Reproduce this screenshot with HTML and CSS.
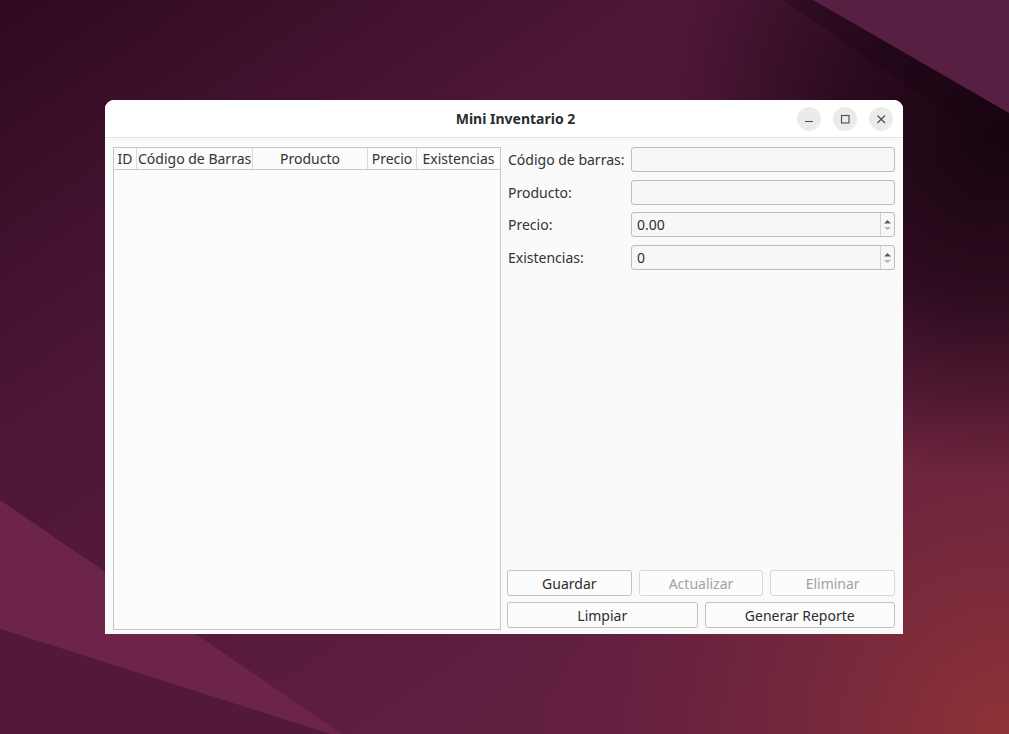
FILE: index.html
```html
<!DOCTYPE html>
<html lang="es">
<head>
<meta charset="utf-8">
<title>Mini Inventario 2</title>
<link rel="stylesheet" href="styles.css">
</head>
<body>
<div class="window">
  <div class="titlebar">
    <div class="title">Mini Inventario 2</div>
    <div class="controls">
      <div class="ctl"><svg width="16" height="16" viewBox="0 0 16 16"><path d="M4 10.5h8" stroke="#4a4a4a" stroke-width="1.2" fill="none"/></svg></div>
      <div class="ctl"><svg width="16" height="16" viewBox="0 0 16 16"><rect x="4.5" y="4.5" width="7.5" height="7.5" stroke="#4a4a4a" stroke-width="1.1" fill="none"/></svg></div>
      <div class="ctl"><svg width="16" height="16" viewBox="0 0 16 16"><path d="M4.5 4.5l7.5 7.5M12 4.5l-7.5 7.5" stroke="#4a4a4a" stroke-width="1.1" fill="none"/></svg></div>
    </div>
  </div>
  <div class="content">
    <div class="table">
      <div class="thead">
        <div class="th c-id">ID</div>
        <div class="th c-code">Código de Barras</div>
        <div class="th c-prod">Producto</div>
        <div class="th c-price">Precio</div>
        <div class="th c-stock">Existencias</div>
      </div>
      <div class="tbody"></div>
    </div>
    <div class="panel">
      <div class="form">
        <div class="row"><label class="lbl">Código de barras:</label><div class="field"></div></div>
        <div class="row"><label class="lbl">Producto:</label><div class="field"></div></div>
        <div class="row"><label class="lbl">Precio:</label>
          <div class="field spin"><span class="val">0.00</span>
            <span class="arrows"><svg width="9" height="14" viewBox="0 0 9 14"><path d="M1 5.5L4.5 2L8 5.5Z" fill="#5a5a5a"/><path d="M1 9L4.5 12L8 9Z" fill="#b4b4b4"/></svg></span>
          </div>
        </div>
        <div class="row"><label class="lbl">Existencias:</label>
          <div class="field spin"><span class="val">0</span>
            <span class="arrows"><svg width="9" height="14" viewBox="0 0 9 14"><path d="M1 5.5L4.5 2L8 5.5Z" fill="#5a5a5a"/><path d="M1 9L4.5 12L8 9Z" fill="#b4b4b4"/></svg></span>
          </div>
        </div>
      </div>
      <div class="buttons">
        <div class="brow three">
          <div class="btn">Guardar</div>
          <div class="btn disabled">Actualizar</div>
          <div class="btn disabled">Eliminar</div>
        </div>
        <div class="brow two">
          <div class="btn">Limpiar</div>
          <div class="btn">Generar Reporte</div>
        </div>
      </div>
    </div>
  </div>
</div>
</body>
</html>
```
FILE: styles.css
```css
html, body {
  margin: 0;
  padding: 0;
}
body {
  width: 1009px;
  height: 734px;
  overflow: hidden;
  font-family: "Noto Sans", "DejaVu Sans", sans-serif;
  font-size: 14px;
  color: #353535;
  background-color: #4e1735;
  background-image: url("data:image/svg+xml;utf8,<svg xmlns='http://www.w3.org/2000/svg' width='1009' height='734'><defs><linearGradient id='b' gradientUnits='userSpaceOnUse' x1='0' y1='0' x2='500' y2='734'><stop offset='0' stop-color='%232f0a1e'/><stop offset='0.4' stop-color='%234c1636'/><stop offset='1' stop-color='%23611f40'/></linearGradient><radialGradient id='r' gradientUnits='userSpaceOnUse' cx='1009' cy='734' r='520'><stop offset='0' stop-color='%238f3336' stop-opacity='1'/><stop offset='0.5' stop-color='%237a2a3c' stop-opacity='0.6'/><stop offset='1' stop-color='%23611f40' stop-opacity='0'/></radialGradient><radialGradient id='s' gradientUnits='userSpaceOnUse' cx='1000' cy='140' r='340'><stop offset='0' stop-color='%23170410' stop-opacity='0.97'/><stop offset='0.45' stop-color='%23170410' stop-opacity='0.7'/><stop offset='1' stop-color='%23170410' stop-opacity='0'/></radialGradient></defs><rect width='1009' height='734' fill='url(%23b)'/><rect width='1009' height='734' fill='url(%23r)'/><rect width='1009' height='734' fill='url(%23s)'/><polygon points='783,0 1009,0 1009,157' fill='%23170410' fill-opacity='0.3'/><polygon points='813,0 1009,0 1009,113' fill='%23571f41'/><polygon points='0,500 342,734 330,734 0,629' fill='%236c244a'/><polygon points='0,629 330,734 0,734' fill='%23521938'/></svg>");
  background-repeat: no-repeat;
}

.window {
  margin: 100px 0 0 105px;
  width: 798px;
  height: 534px;
  background: #fafafa;
  border-radius: 9px 9px 0 0;
  display: flex;
  flex-direction: column;
  overflow: hidden;
}

.titlebar {
  box-sizing: border-box;
  height: 38px;
  flex: none;
  background: #ffffff;
  border-bottom: 1px solid #e3e3e3;
  display: flex;
  align-items: center;
  padding: 0 10px 0 129px;
}
.title {
  flex: 1;
  text-align: center;
  font-weight: 700;
  font-size: 14px;
  color: #2c2c2c;
}
.controls {
  display: flex;
  gap: 12px;
}
.ctl {
  width: 24px;
  height: 24px;
  border-radius: 50%;
  background: #ebebeb;
  display: flex;
  align-items: center;
  justify-content: center;
}

.content {
  flex: 1;
  min-height: 0;
  display: grid;
  grid-template-columns: 1fr 1fr;
  gap: 6px;
  padding: 9px 8px 4px 8px;
}

.table {
  border: 1px solid #c6c6c6;
  background: #fbfbfb;
  display: flex;
  flex-direction: column;
  min-height: 0;
}
.thead {
  box-sizing: border-box;
  height: 22px;
  display: flex;
  border-bottom: 1px solid #c9c9c9;
}
.th {
  box-sizing: border-box;
  height: 21px;
  line-height: 21px;
  white-space: nowrap;
  overflow: hidden;
  text-align: center;
  border-right: 1px solid #d9d9d9;
  color: #333;
}
.c-id { width: 23px; }
.c-code { width: 116px; text-align: left; padding-left: 1px; }
.c-prod { width: 115px; }
.c-price { width: 49px; }
.c-stock { width: 83px; border-right: none; }
.tbody { flex: 1; }

.panel {
  display: flex;
  flex-direction: column;
  min-height: 0;
}
.form {
  display: flex;
  flex-direction: column;
  gap: 8px;
}
.row {
  display: grid;
  grid-template-columns: 124px 1fr;
  align-items: center;
  height: 25px;
}
.row:nth-child(3) {
  margin-top: -1px;
}
.lbl {
  padding-left: 1px;
  white-space: nowrap;
  color: #333;
}
.field {
  box-sizing: border-box;
  height: 25px;
  border: 1px solid #bcbcbc;
  border-radius: 3px;
  background: #f7f7f7;
  display: flex;
  align-items: center;
}
.spin .val {
  flex: 1;
  padding-left: 5px;
  color: #2e2e2e;
}
.spin .arrows {
  box-sizing: border-box;
  width: 14px;
  height: 100%;
  border-left: 1px solid #d2d2d2;
  display: flex;
  align-items: center;
  justify-content: center;
}

.buttons {
  margin-top: auto;
  margin-bottom: 2px;
  display: flex;
  flex-direction: column;
  gap: 6px;
}
.brow {
  display: grid;
  gap: 7px;
}
.brow.three { grid-template-columns: 1fr 1fr 1fr; }
.brow.two { grid-template-columns: 1fr 1fr; }
.btn {
  box-sizing: border-box;
  height: 26px;
  border: 1px solid #c2c2c2;
  border-radius: 3px;
  background: #fcfcfc;
  display: flex;
  align-items: center;
  justify-content: center;
  color: #2e2e2e;
}
.btn.disabled {
  color: #a3a3a3;
  border-color: #d7d7d7;
}
```
